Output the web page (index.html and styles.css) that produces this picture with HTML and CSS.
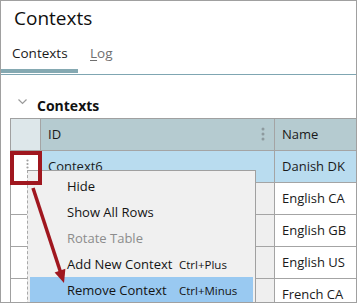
FILE: index.html
```html
<!DOCTYPE html>
<html>
<head>
<meta charset="utf-8">
<link rel="stylesheet" href="styles.css">
</head>
<body>
<div class="frame">
  <h1 class="title">Contexts</h1>
  <div class="tabs">
    <div class="tab active">Contexts</div>
    <div class="tab log"><u>L</u>og</div>
  </div>
  <div class="section">
    <svg class="chev" width="10" height="6" viewBox="0 0 10 6"><polyline points="0.5,0.5 4.5,4.5 8.5,0.5" fill="none" stroke="#9a9a9a" stroke-width="1.2"/></svg>
    <span class="section-title">Contexts</span>
  </div>
  <div class="table">
    <div class="cell corner"></div>
    <div class="cell head id">ID<svg class="kebab" width="4" height="15" viewBox="0 0 4 15"><circle cx="2" cy="2" r="1.5" fill="#8d9a9e"/><circle cx="2" cy="7" r="1.5" fill="#8d9a9e"/><circle cx="2" cy="12" r="1.5" fill="#8d9a9e"/></svg></div>
    <div class="cell head">Name</div>

    <div class="cell rowhead"><svg class="rowdots" width="3" height="10" viewBox="0 0 3 10"><circle cx="1.5" cy="1.5" r="1.1" fill="#a0a0a0"/><circle cx="1.5" cy="5" r="1.1" fill="#a0a0a0"/><circle cx="1.5" cy="8.5" r="1.1" fill="#a0a0a0"/></svg></div>
    <div class="cell sel">Context6</div>
    <div class="cell sel">Danish DK</div>

    <div class="cell rowhead"></div>
    <div class="cell ro"></div>
    <div class="cell">English CA</div>

    <div class="cell rowhead"></div>
    <div class="cell ro"></div>
    <div class="cell">English GB</div>

    <div class="cell rowhead"></div>
    <div class="cell ro"></div>
    <div class="cell">English US</div>

    <div class="cell rowhead"></div>
    <div class="cell ro"></div>
    <div class="cell">French CA</div>
  </div>

  <div class="menu">
    <div class="item"><span class="label">Hide</span></div>
    <div class="item"><span class="label">Show All Rows</span></div>
    <div class="item disabled"><span class="label">Rotate Table</span></div>
    <div class="item"><span class="label">Add New Context</span><span class="shortcut">Ctrl+Plus</span></div>
    <div class="item hover"><span class="label">Remove Context</span><span class="shortcut">Ctrl+Minus</span></div>
  </div>

  <div class="redbox"></div>
  <svg class="arrow" width="357" height="303" viewBox="0 0 357 303">
    <line x1="33" y1="188" x2="60.5" y2="272" stroke="#a0171f" stroke-width="3.5"/>
    <polygon points="64,283 65.4,268.8 54.6,272.4" fill="#a0171f"/>
  </svg>
</div>
</body>
</html>
```
FILE: styles.css
```css
* { box-sizing: border-box; }
html, body { margin: 0; padding: 0; background: #fff; }
body { font-family: "Open Sans", "Noto Sans", sans-serif; color: #1a1a1a; }

.frame {
  position: relative;
  width: 357px;
  height: 303px;
  border: 1px solid #a0a0a0;
  overflow: hidden;
  background: #fff;
}

.title {
  margin: 0;
  height: 36px;
  padding: 4px 0 0 13px;
  font-size: 19px;
  font-weight: 400;
  line-height: 26px;
  color: #0f0f0f;
}

.tabs {
  display: flex;
  height: 38px;
  border-bottom: 1px solid #7fa6b2;
}
.tab {
  height: 36px;
  padding-top: 7px;
  font-size: 13.5px;
  line-height: 18px;
}
.tab.active {
  width: 77px;
  padding-left: 11px;
  border-bottom: 4px solid #85a9b2;
  color: #1a1a1a;
}
.tab.log {
  padding-left: 12px;
  color: #6f6f6f;
}
.tab u { text-decoration-thickness: 1px; text-underline-offset: 2px; }

.section {
  position: relative;
  height: 43px;
  padding: 19px 0 0 36px;
}
.chev {
  position: absolute;
  left: 17px;
  top: 24px;
}
.section-title {
  font-size: 14px;
  font-weight: 700;
  line-height: 19px;
  color: #111;
}

.table {
  margin-left: 9px;
  display: grid;
  grid-template-columns: 30px 234px 81px;
  grid-auto-rows: 32px;
  border-top: 1px solid #a0a0a0;
  border-left: 1px solid #a0a0a0;
}
.cell {
  display: flex;
  align-items: center;
  font-size: 13px;
  line-height: 31px;
  padding-left: 7px;
  border-bottom: 1px solid #a4a4a4;
  border-right: 1px solid #a4a4a4;
  white-space: nowrap;
  overflow: hidden;
  color: #1a1a1a;
}
.cell:nth-child(3n) { border-right: none; }
.corner { background: #dde7ea; padding: 0; }
.head { background: #b5cbd0; }
.head.id { padding-right: 9px; }
.kebab { margin-left: auto; }
.rowhead { background: #fff; padding: 0 0 0 15px; align-items: flex-start; }
.rowdots { margin-top: 8px; }
.sel { background: #b9dcef; }
.ro { background: #efefef; }

.menu {
  position: absolute;
  left: 26px;
  top: 169px;
  width: 229px;
  height: 150px;
  padding: 2px;
  background: #f0f0f0;
  border: 1px solid #a0a0a0;
  border-left: 1px dashed #a8a8a8;
}
.item {
  display: flex;
  align-items: center;
  height: 26px;
  padding-left: 37px;
  font-size: 13px;
  color: #141414;
  white-space: nowrap;
}
.item .label { width: 112px; }
.item .shortcut { font-size: 11.5px; }
.item.disabled { color: #8c8c8c; }
.item.hover { background: #99c9f1; }

.redbox {
  position: absolute;
  left: 9px;
  top: 150px;
  width: 32px;
  height: 34px;
  border: 4px solid #a0171f;
}
.arrow {
  position: absolute;
  left: -1px;
  top: -1px;
}
```
